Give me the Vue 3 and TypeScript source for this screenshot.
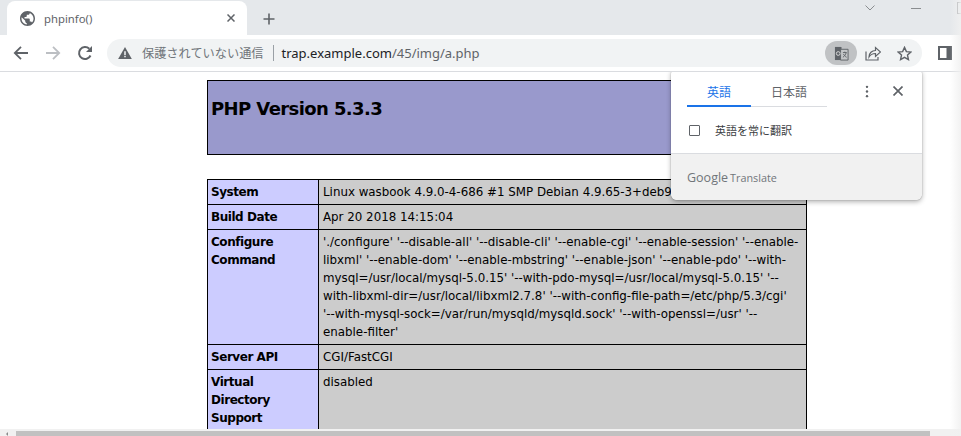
<script setup lang="ts">
interface Row {
  label: string[]
  lines: string[]
}

const rows: Row[] = [
  { label: ['System'], lines: ['Linux wasbook 4.9.0-4-686 #1 SMP Debian 4.9.65-3+deb9u1 (2017-12-23) i686'] },
  { label: ['Build Date'], lines: ['Apr 20 2018 14:15:04'] },
  {
    label: ['Configure', 'Command'],
    lines: [
      "'./configure' '--disable-all' '--disable-cli' '--enable-cgi' '--enable-session' '--enable-",
      "libxml' '--enable-dom' '--enable-mbstring' '--enable-json' '--enable-pdo' '--with-",
      "mysql=/usr/local/mysql-5.0.15' '--with-pdo-mysql=/usr/local/mysql-5.0.15' '--",
      "with-libxml-dir=/usr/local/libxml2.7.8' '--with-config-file-path=/etc/php/5.3/cgi'",
      "'--with-mysql-sock=/var/run/mysqld/mysqld.sock' '--with-openssl=/usr' '--",
      "enable-filter'",
    ],
  },
  { label: ['Server API'], lines: ['CGI/FastCGI'] },
  { label: ['Virtual', 'Directory', 'Support'], lines: ['disabled'] },
]
</script>

<template>
  <div class="window">
    <div class="tabstrip">
      <div class="tab">
        <svg class="favicon" viewBox="2 2 20 20" width="15" height="15">
          <path d="M12 2C6.480 2 2 6.480 2 12s4.480 10 10 10 10-4.480 10-10S17.520 2 12 2zm-1 17.930c-3.950-.490-7-3.850-7-7.930 0-.620.080-1.210.210-1.790L9 15v1c0 1.100.900 2 2 2v1.930zm6.900-2.540c-.260-.810-1-1.390-1.900-1.390h-1v-3c0-.550-.450-1-1-1H8v-2h2c.550 0 1-.450 1-1V7h2c1.100 0 2-.900 2-2v-.410c2.930 1.190 5 4.060 5 7.410 0 2.080-.800 3.970-2.100 5.390z" fill="#5f6368" />
        </svg>
        <span class="tab-title">phpinfo()</span>
        <svg class="tab-close" viewBox="0 0 8 8" width="8" height="8">
          <path d="M.5.5l7 7M7.500.5l-7 7" stroke="#5f6368" stroke-width="1.500" />
        </svg>
      </div>
      <svg class="new-tab" viewBox="0 0 12 12" width="12" height="12">
        <path d="M6 .5v11M.5 6h11" stroke="#5f6368" stroke-width="1.600" />
      </svg>
      <div class="win-controls">
        <svg viewBox="0 0 10 6" width="10" height="6"><path d="M.5.5 5 5 9.500.5" fill="none" stroke="#8a8d90" /></svg>
        <span class="win-min"></span>
        <span class="win-max"></span>
      </div>
    </div>

    <div class="toolbar">
      <svg class="nav" viewBox="0 0 16 16" width="16" height="16">
        <path d="M15 8H2M8 1.800 1.800 8 8 14.200" fill="none" stroke="#5f6368" stroke-width="1.800" />
      </svg>
      <svg class="nav" viewBox="0 0 16 16" width="16" height="16">
        <path d="M1 8h13M8 1.800 14.200 8 8 14.200" fill="none" stroke="#bcbfc3" stroke-width="1.800" />
      </svg>
      <svg class="nav" viewBox="0 0 16 16" width="16" height="16">
        <path d="M13.500 10.500A6 6 0 1 1 12.300 3.800" fill="none" stroke="#5f6368" stroke-width="2" />
        <path d="M15 1v6H9z" fill="#5f6368" />
      </svg>
      <div class="omnibox">
        <svg class="warn" viewBox="0 0 16 14" width="14" height="12">
          <path d="M8 0l8 14H0z" fill="#5f6368" />
          <path d="M7.100 5h1.800v4.500H7.100zM7.100 10.500h1.800V12H7.100z" fill="#f1f3f4" />
        </svg>
        <span class="insecure">保護されていない通信</span>
        <span class="divider"></span>
        <span class="url"><span class="host">trap.example.com</span>/45/img/a.php</span>
        <span class="omni-actions">
          <span class="translate-pill">
            <svg viewBox="0 0 16 16" width="15" height="15">
              <path d="M1 1h7v14H1z" fill="#5f6368" />
              <path d="M7 3.500h8v11.500H7z" fill="#c4c6c8" stroke="#5f6368" />
              <circle cx="4.500" cy="8" r="2" fill="none" stroke="#dcdcdc" />
              <path d="M9.500 7h4M11.500 6v1M13 7c-.5 2.500-2 4-3.500 5M10 8.500c1 1.500 2 3 3.500 3.500" fill="none" stroke="#5f6368" />
            </svg>
          </span>
          <svg class="share" viewBox="0 0 16 16" width="16" height="16">
            <path d="M1 6.500V15h12v-3" fill="none" stroke="#5f6368" stroke-width="1.200" />
            <path d="M4 12c0-4 3-6.500 6.500-6.500V2.500L15.500 7l-5 4.500v-3c-3 0-5 1-6.500 3.500z" fill="none" stroke="#5f6368" stroke-width="1.200" />
          </svg>
          <svg class="star" viewBox="0 0 16 16" width="15" height="15">
            <path d="M8 1.500l2 4.500 4.800.5-3.600 3.200 1 4.800L8 12.100 3.800 14.500l1-4.800L1.200 6.500 6 6z" fill="none" stroke="#5f6368" stroke-width="1.500" />
          </svg>
        </span>
      </div>
      <svg class="sidepanel" viewBox="0 0 14 14" width="14" height="14">
        <path d="M0 0h14v14H0z" fill="#5f6368" />
        <path d="M2 2h6.500v10H2z" fill="#fff" />
      </svg>
    </div>

    <div class="page">
      <div class="content">
        <div class="php-head"><h1>PHP Version 5.3.3</h1></div>
        <table class="php-table">
          <tr v-for="row in rows" :key="row.label[0]">
            <td class="key"><div v-for="l in row.label" :key="l">{{ l }}</div></td>
            <td class="val"><div v-for="l in row.lines" :key="l">{{ l }}</div></td>
          </tr>
        </table>
      </div>

      <div class="bubble">
        <div class="bubble-main">
          <div class="bubble-tabs">
            <div class="lang-tabs">
              <span class="lang active">英語</span>
              <span class="lang">日本語</span>
            </div>
            <svg class="more" viewBox="0 0 4 14" width="4" height="13">
              <circle cx="2" cy="2" r="1.300" fill="#5f6368" />
              <circle cx="2" cy="7" r="1.300" fill="#5f6368" />
              <circle cx="2" cy="12" r="1.300" fill="#5f6368" />
            </svg>
            <svg class="close" viewBox="0 0 10 10" width="10" height="10">
              <path d="M.5.5l9 9M9.500.5l-9 9" stroke="#5f6368" stroke-width="1.700" />
            </svg>
          </div>
          <label class="always">
            <span class="checkbox"></span>
            <span>英語を常に翻訳</span>
          </label>
        </div>
        <div class="bubble-foot">
          <span class="google">Google</span>
          <span class="translate">Translate</span>
        </div>
      </div>

      <div class="scrollbar">
        <span class="arrow"></span>
        <div class="thumb"></div>
      </div>
    </div>

    <div class="edge"></div>
  </div>
</template>

<style>
html,
body {
  margin: 0;
  overflow: hidden;
}
</style>

<style scoped>
.window {
  position: relative;
  width: 961px;
  height: 436px;
  display: flex;
  flex-direction: column;
  overflow: hidden;
  background: #fff;
  font-family: "Noto Sans", "Noto Sans CJK JP", sans-serif;
}

.tabstrip {
  height: 35px;
  flex: none;
  display: flex;
  align-items: flex-start;
  background: #e5e8eb;
  box-sizing: border-box;
  padding: 1px 0 0 7px;
}

.tab {
  width: 240px;
  height: 34px;
  flex: none;
  box-sizing: border-box;
  background: #fff;
  border-radius: 8px 8px 0 0;
  display: flex;
  align-items: center;
  padding: 0 12px 0 13px;
}

.favicon {
  flex: none;
  margin-right: 9px;
}

.tab-title {
  flex: 1;
  font-size: 11.300px;
  color: #5f6368;
}

.new-tab {
  flex: none;
  margin: 12px 0 0 16px;
}

.win-controls {
  margin-left: auto;
  margin-right: -8px;
  flex: none;
  display: flex;
  align-items: center;
  height: 14px;
}

.win-min {
  width: 10px;
  height: 1px;
  background: #8a8d90;
  margin-left: 36px;
}

.win-max {
  width: 10px;
  height: 10px;
  border: 1px solid #8a8d90;
  margin-left: 36px;
}

.toolbar {
  height: 37px;
  flex: none;
  box-sizing: border-box;
  background: #fff;
  border-bottom: 1px solid #dadce0;
  display: flex;
  align-items: center;
  padding: 0 9px 0 13px;
  gap: 16px;
}

.omnibox {
  flex: 1;
  height: 28px;
  margin-left: -2px;
  border-radius: 14px;
  background: #f1f3f4;
  display: flex;
  align-items: center;
  padding: 0 10px 0 11px;
  font-size: 13px;
  color: #5f6368;
}

.warn {
  flex: none;
  margin-right: 10px;
}

.insecure {
  font-size: 12.200px;
  color: #70757a;
}

.divider {
  width: 1px;
  height: 16px;
  background: #9aa0a6;
  margin: 0 8px 0 9px;
}

.host {
  color: #202124;
}

.omni-actions {
  margin-left: auto;
  display: flex;
  align-items: center;
}

.translate-pill {
  width: 32px;
  height: 24px;
  border-radius: 12px;
  background: #c0c2c4;
  display: flex;
  align-items: center;
  justify-content: center;
}

.share {
  margin-left: 8px;
}

.star {
  margin-left: 16px;
}

.page {
  flex: 1;
  position: relative;
  overflow: hidden;
  font-family: "DejaVu Sans", Verdana, sans-serif;
  color: #000;
}

.content {
  width: 600px;
  margin: 8px 0 0 207px;
}

.php-head {
  height: 75px;
  box-sizing: border-box;
  border: 1px solid #000;
  background: #9999cc;
  padding: 17px 3px 0;
}

.php-head h1 {
  margin: 0;
  font-size: 18px;
  letter-spacing: -0.6px;
  line-height: 21px;
  font-weight: bold;
}

.php-table {
  margin-top: 24px;
  width: 600px;
  table-layout: fixed;
  border-collapse: collapse;
  font-size: 11.850px;
  line-height: 18px;
}

.php-table td {
  border: 1px solid #000;
  padding: 3px;
  vertical-align: top;
  white-space: nowrap;
}

.php-table td.key {
  width: 104px;
  background: #ccccff;
  font-weight: bold;
  font-size: 12px;
  letter-spacing: -0.45px;
}

.php-table td.val {
  background: #cccccc;
  padding-left: 4px;
}

.bubble {
  position: absolute;
  left: 671px;
  top: -4px;
  width: 251px;
  height: 132px;
  background: #fff;
  border-radius: 6px;
  box-shadow: 0 0 1px rgba(0, 0, 0, 0.5), 0 2px 5px rgba(0, 0, 0, 0.3);
  overflow: hidden;
  display: flex;
  flex-direction: column;
  font-family: "Noto Sans CJK JP", "Noto Sans", sans-serif;
}

.bubble-main {
  flex: 1;
}

.bubble-tabs {
  display: flex;
  align-items: flex-start;
  height: 39px;
  padding: 0 18px 0 16px;
}

.lang-tabs {
  display: flex;
  width: 140px;
  height: 39px;
  flex: none;
  box-sizing: border-box;
  border-bottom: 1px solid #dadce0;
  font-size: 12px;
  color: #5f6368;
}

.lang {
  width: 64px;
  height: 39px;
  box-sizing: border-box;
  padding-top: 16px;
  line-height: 16px;
  text-align: center;
}

.lang + .lang {
  width: 76px;
}

.lang.active {
  color: #1a73e8;
  border-bottom: 2px solid #1a73e8;
}

.more {
  flex: none;
  margin: 17px 0 0 38px;
}

.close {
  flex: none;
  margin: 18px 0 0 24px;
}

.always {
  display: flex;
  align-items: center;
  margin: 15px 0 0 18px;
  font-size: 11px;
  color: #3c4043;
  gap: 15px;
}

.checkbox {
  width: 9px;
  height: 9px;
  border: 1.500px solid #5f6368;
  border-radius: 1px;
}

.bubble-foot {
  height: 47px;
  flex: none;
  box-sizing: border-box;
  border-top: 1px solid #dadce0;
  background: #f1f1f1;
  display: flex;
  align-items: center;
  padding-left: 16px;
  gap: 2px;
  color: #70757a;
  font-family: "Open Sans", sans-serif;
}

.google {
  font-size: 12.500px;
}

.translate {
  font-size: 10.800px;
}

.scrollbar {
  position: absolute;
  left: 0;
  right: 0;
  bottom: 0;
  height: 7px;
  background: #f1f1f1;
  display: flex;
}

.arrow {
  width: 0;
  height: 0;
  margin: 3px 0 0 6px;
  border-style: solid;
  border-width: 2px 2px 2px 0;
  border-color: transparent #8a8a8a transparent transparent;
}

.thumb {
  width: 914px;
  margin-left: 8px;
  margin-top: 2px;
  background: #c1c1c1;
}

.edge {
  position: absolute;
  top: 0;
  right: 0;
  bottom: 0;
  width: 11px;
  background: linear-gradient(to right, rgba(240, 240, 240, 0), rgba(240, 240, 240, 0.9));
  pointer-events: none;
}
</style>
